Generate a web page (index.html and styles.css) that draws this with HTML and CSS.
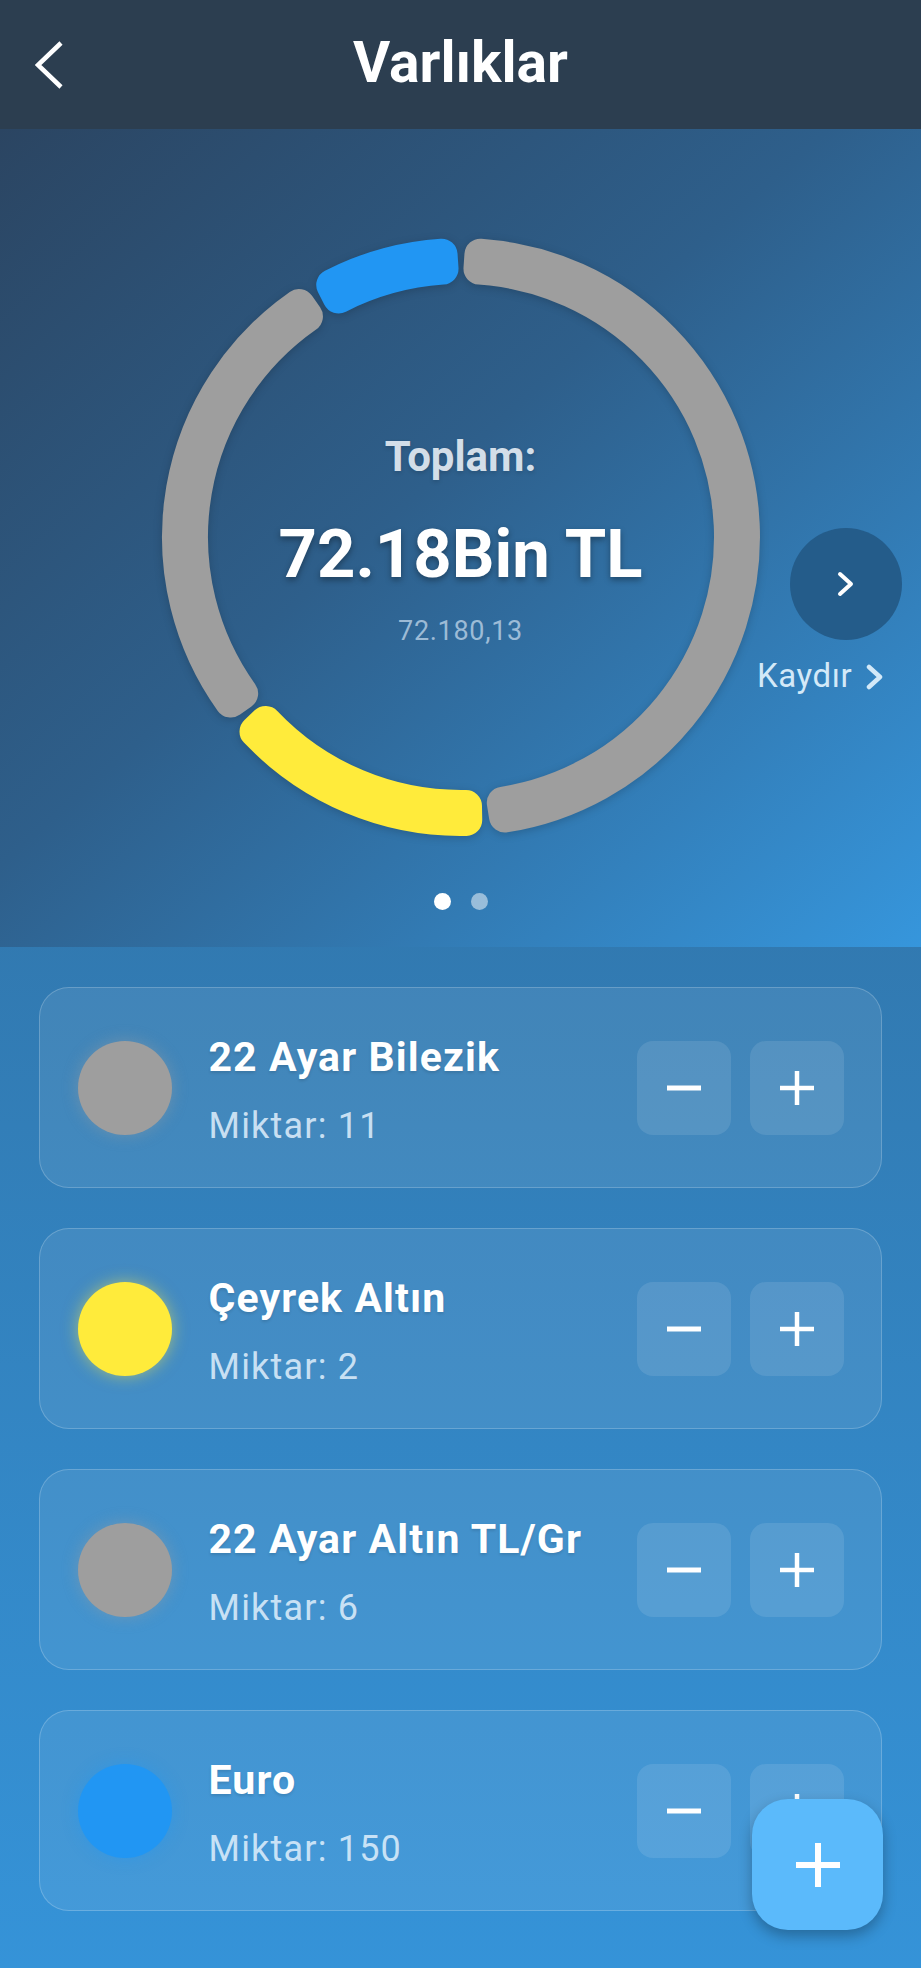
FILE: index.html
```html
<!DOCTYPE html>
<html lang="tr">
<head>
<meta charset="utf-8">
<title>Varlıklar</title>
<link rel="stylesheet" href="styles.css">
</head>
<body>
<div class="page">
  <header class="app-bar">
    <button class="back-btn" aria-label="Geri">
      <svg width="30" height="48" viewBox="0 0 30 48"><polyline points="26,2 3,24 26,46" fill="none" stroke="#fff" stroke-width="4.5"/></svg>
    </button>
    <h1 class="app-title">Varlıklar</h1>
    <span></span>
  </header>

  <section class="hero">
    <div class="ring-wrap">
      <svg class="ring" width="600" height="600" viewBox="0 0 600 600">
        <g stroke-width="32" stroke-linejoin="round">
          <path fill="#9e9e9e" stroke="#9e9e9e" d="M319.44 17.67 A283 283 0 0 1 343.98 579.56 L341.80 565.73 A269 269 0 0 0 318.48 31.63 Z"/>
          <path fill="#ffeb3b" stroke="#ffeb3b" d="M305.24 582.95 A283 283 0 0 1 94.51 494.60 L104.67 484.97 A269 269 0 0 0 304.98 568.95 Z"/>
          <path fill="#9e9e9e" stroke="#9e9e9e" d="M69.77 464.59 A283 283 0 0 1 137.92 68.01 L145.94 79.49 A269 269 0 0 0 81.16 456.45 Z"/>
          <path fill="#2196f3" stroke="#2196f3" d="M171.26 47.98 A283 283 0 0 1 280.56 17.67 L281.52 31.63 A269 269 0 0 0 177.63 60.45 Z"/>
        </g>
      </svg>
      <div class="ring-center">
        <div class="total-label">Toplam:</div>
        <div class="total-value">72.18Bin TL</div>
        <div class="total-exact">72.180,13</div>
      </div>
    </div>
    <div class="dots">
      <span class="dot active"></span>
      <span class="dot"></span>
    </div>
    <div class="swipe-hint">
      <button class="next-btn" aria-label="Sonraki">
        <svg width="18" height="26" viewBox="0 0 18 26"><polyline points="3,3 14,13 3,23" fill="none" stroke="#fff" stroke-width="4" stroke-linecap="round" stroke-linejoin="round"/></svg>
      </button>
      <div class="swipe-label">
        <span>Kaydır</span>
        <svg width="20" height="26" viewBox="0 0 20 26"><polyline points="4,3 15,13 4,23" fill="none" stroke="#d3e9f8" stroke-width="4.5" stroke-linecap="round" stroke-linejoin="round"/></svg>
      </div>
    </div>
  </section>

  <main class="asset-list">
    <div class="asset-card">
      <span class="asset-dot gray"></span>
      <div class="asset-info">
        <div class="asset-name">22 Ayar Bilezik</div>
        <div class="asset-qty">Miktar: 11</div>
      </div>
      <div class="asset-actions">
        <button class="qty-btn" aria-label="Azalt"><svg width="36" height="36" viewBox="0 0 36 36"><line x1="1" y1="18" x2="35" y2="18" stroke="#fff" stroke-width="5"/></svg></button>
        <button class="qty-btn" aria-label="Arttır"><svg width="36" height="36" viewBox="0 0 36 36"><line x1="1" y1="18" x2="35" y2="18" stroke="#fff" stroke-width="4.5"/><line x1="18" y1="1" x2="18" y2="35" stroke="#fff" stroke-width="4.5"/></svg></button>
      </div>
    </div>

    <div class="asset-card">
      <span class="asset-dot yellow"></span>
      <div class="asset-info">
        <div class="asset-name">Çeyrek Altın</div>
        <div class="asset-qty">Miktar: 2</div>
      </div>
      <div class="asset-actions">
        <button class="qty-btn" aria-label="Azalt"><svg width="36" height="36" viewBox="0 0 36 36"><line x1="1" y1="18" x2="35" y2="18" stroke="#fff" stroke-width="5"/></svg></button>
        <button class="qty-btn" aria-label="Arttır"><svg width="36" height="36" viewBox="0 0 36 36"><line x1="1" y1="18" x2="35" y2="18" stroke="#fff" stroke-width="4.5"/><line x1="18" y1="1" x2="18" y2="35" stroke="#fff" stroke-width="4.5"/></svg></button>
      </div>
    </div>

    <div class="asset-card">
      <span class="asset-dot gray"></span>
      <div class="asset-info">
        <div class="asset-name">22 Ayar Altın TL/Gr</div>
        <div class="asset-qty">Miktar: 6</div>
      </div>
      <div class="asset-actions">
        <button class="qty-btn" aria-label="Azalt"><svg width="36" height="36" viewBox="0 0 36 36"><line x1="1" y1="18" x2="35" y2="18" stroke="#fff" stroke-width="5"/></svg></button>
        <button class="qty-btn" aria-label="Arttır"><svg width="36" height="36" viewBox="0 0 36 36"><line x1="1" y1="18" x2="35" y2="18" stroke="#fff" stroke-width="4.5"/><line x1="18" y1="1" x2="18" y2="35" stroke="#fff" stroke-width="4.5"/></svg></button>
      </div>
    </div>

    <div class="asset-card">
      <span class="asset-dot blue"></span>
      <div class="asset-info">
        <div class="asset-name">Euro</div>
        <div class="asset-qty">Miktar: 150</div>
      </div>
      <div class="asset-actions">
        <button class="qty-btn" aria-label="Azalt"><svg width="36" height="36" viewBox="0 0 36 36"><line x1="1" y1="18" x2="35" y2="18" stroke="#fff" stroke-width="5"/></svg></button>
        <button class="qty-btn" aria-label="Arttır"><svg width="36" height="36" viewBox="0 0 36 36"><line x1="1" y1="18" x2="35" y2="18" stroke="#fff" stroke-width="4.5"/><line x1="18" y1="1" x2="18" y2="35" stroke="#fff" stroke-width="4.5"/></svg></button>
      </div>
    </div>
  </main>

  <button class="fab" aria-label="Ekle">
    <svg width="46" height="46" viewBox="0 0 46 46"><line x1="1" y1="23" x2="45" y2="23" stroke="#fff" stroke-width="6"/><line x1="23" y1="1" x2="23" y2="45" stroke="#fff" stroke-width="6"/></svg>
  </button>
</div>
</body>
</html>
```

FILE: styles.css
```css
* { box-sizing: border-box; }

html, body {
  margin: 0;
  padding: 0;
}

body {
  width: 921px;
  min-height: 1968px;
  font-family: Roboto, "Noto Sans", "Liberation Sans", sans-serif;
  color: #fff;
  background: #3591d6;
}

button {
  font: inherit;
  color: inherit;
  border: 0;
  padding: 0;
  background: none;
  cursor: pointer;
}

.page {
  position: relative;
  width: 921px;
  min-height: 1968px;
  display: flex;
  flex-direction: column;
  background: linear-gradient(to bottom, #2e628d 0%, #3593d8 100%);
}

/* App bar */
.app-bar {
  height: 129px;
  background: #2c3e50;
  display: grid;
  grid-template-columns: 1fr auto 1fr;
  align-items: center;
}

.back-btn {
  justify-self: start;
  display: flex;
  margin-left: 35px;
}

.app-title {
  margin: 0;
  font-size: 57px;
  line-height: 57px;
  font-weight: 700;
  letter-spacing: 0;
  padding-bottom: 4px;
}

/* Hero */
.hero {
  position: relative;
  height: 818px;
  padding-top: 108px;
  display: flex;
  flex-direction: column;
  align-items: center;
  background: linear-gradient(to bottom right, #2b4562 0%, #2e5f8b 45%, #3696dc 100%);
}

.ring-wrap {
  display: grid;
  width: 600px;
  height: 600px;
}

.ring-wrap > * {
  grid-area: 1 / 1;
}

.ring {
  display: block;
  filter: drop-shadow(0 2px 4px rgba(0, 0, 0, 0.18));
}

.ring-center {
  align-self: start;
  padding-top: 199px;
  display: flex;
  flex-direction: column;
  align-items: center;
  text-align: center;
}

.total-label {
  font-size: 42px;
  line-height: 42px;
  font-weight: 700;
  color: rgba(236, 242, 248, 0.88);
  text-shadow: 0 2px 4px rgba(0, 0, 0, 0.15);
}

.total-value {
  margin-top: 42px;
  font-size: 67px;
  line-height: 68px;
  font-weight: 700;
  letter-spacing: 0;
  color: #fff;
  text-shadow: 0 3px 6px rgba(0, 0, 0, 0.35);
}

.total-exact {
  margin-top: 30px;
  font-size: 27px;
  line-height: 26px;
  font-weight: 400;
  letter-spacing: 0.7px;
  color: rgba(200, 220, 238, 0.72);
}

.dots {
  margin-top: 56px;
  display: flex;
  gap: 20px;
}

.dot {
  width: 17px;
  height: 17px;
  border-radius: 50%;
  background: rgba(255, 255, 255, 0.5);
}

.dot.active {
  background: #fff;
}

.swipe-hint {
  position: absolute;
  left: 757px;
  top: 399px;
  width: 150px;
  display: flex;
  flex-direction: column;
  align-items: flex-start;
}

.next-btn {
  margin-left: 33px;
  width: 112px;
  height: 112px;
  border-radius: 50%;
  background: #245c8a;
  display: flex;
  align-items: center;
  justify-content: center;
}

.swipe-label {
  margin-top: 19px;
  display: flex;
  align-items: center;
  gap: 13px;
  font-size: 33px;
  line-height: 33px;
  letter-spacing: 0.6px;
  color: #d3e9f8;
}

.swipe-label svg {
  margin-top: 2px;
}

/* Asset list */
.asset-list {
  flex: 1;
  padding: 40px 39px 57px;
  display: flex;
  flex-direction: column;
  gap: 40px;
}

.asset-card {
  height: 201px;
  border-radius: 30px;
  border: 1.5px solid rgba(255, 255, 255, 0.2);
  background: rgba(255, 255, 255, 0.08);
  display: flex;
  align-items: center;
  padding: 0 37.5px;
}

.asset-dot {
  flex: none;
  width: 94px;
  height: 94px;
  border-radius: 50%;
}

.asset-dot.gray {
  background: #9e9e9e;
  box-shadow: 0 0 16px rgba(158, 158, 158, 0.45);
}

.asset-dot.yellow {
  background: #ffeb3b;
  box-shadow: 0 0 16px rgba(255, 235, 59, 0.5);
}

.asset-dot.blue {
  background: #2196f3;
  box-shadow: 0 0 16px rgba(33, 150, 243, 0.45);
}

.asset-info {
  flex: 1;
  margin-left: 37px;
  padding-top: 5px;
  display: flex;
  flex-direction: column;
}

.asset-name {
  font-size: 41px;
  line-height: 48px;
  font-weight: 700;
  letter-spacing: 1.1px;
  color: #fff;
  text-shadow: 0 2px 3px rgba(0, 0, 0, 0.12);
}

.asset-qty {
  margin-top: 24px;
  font-size: 36px;
  line-height: 42px;
  font-weight: 400;
  letter-spacing: 1.2px;
  color: rgba(225, 240, 252, 0.86);
}

.asset-actions {
  display: flex;
  gap: 19px;
}

.qty-btn {
  width: 94px;
  height: 94px;
  border-radius: 16px;
  background: rgba(255, 255, 255, 0.1);
  display: flex;
  align-items: center;
  justify-content: center;
}

/* Floating action button */
.fab {
  position: absolute;
  left: 752px;
  top: 1799px;
  width: 131px;
  height: 131px;
  border-radius: 36px;
  background: #5bbafb;
  box-shadow: 0 6px 14px rgba(0, 0, 0, 0.28);
  display: flex;
  align-items: center;
  justify-content: center;
}
```
